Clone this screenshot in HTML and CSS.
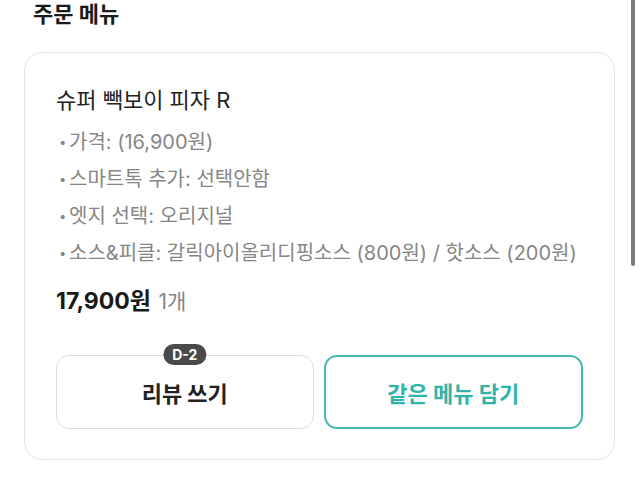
FILE: index.html
```html
<!DOCTYPE html>
<html lang="ko">
<head>
    <meta charset="UTF-8">
    <meta name="viewport" content="width=device-width, initial-scale=1.0">
    <title>주문 메뉴</title>
    <link rel="stylesheet" href="styles.css">
</head>
<body>
    <div class="page">
        <h2 class="section-title">주문 메뉴</h2>
        <div class="menu-card">
            <div class="menu-name">슈퍼 빽보이 피자 R</div>
            <ul class="option-list">
                <li>가격: (16,900원)</li>
                <li>스마트톡 추가: 선택안함</li>
                <li>엣지 선택: 오리지널</li>
                <li>소스&amp;피클: 갈릭아이올리디핑소스 (800원) / 핫소스 (200원)</li>
            </ul>
            <div class="price-row">
                <span class="price">17,900원</span>
                <span class="qty">1개</span>
            </div>
            <div class="btn-row">
                <button class="btn btn-review">
                    <span class="d-badge">D-2</span>
                    리뷰 쓰기
                </button>
                <button class="btn btn-again">같은 메뉴 담기</button>
            </div>
        </div>
    </div>
    <div class="scroll-thumb"></div>
</body>
</html>
```

FILE: styles.css
```css
* { margin: 0; padding: 0; box-sizing: border-box; }
body {
    font-family: Inter, "Noto Sans CJK KR", sans-serif;
    background: #fff;
    color: #222;
    width: 640px;
    height: 496px;
    overflow: hidden;
    position: relative;
}
.page {
    padding: 0 25px 0 24px;
    width: 640px;
}
.section-title {
    font-size: 22px;
    font-weight: 700;
    color: #1a1a1a;
    line-height: 28px;
    padding-left: 9px;
    margin-bottom: 24px;
}
.menu-card {
    border: 1px solid #e6e6e6;
    border-radius: 18px;
    padding: 32px 31px 30px 31px;
}
.menu-name {
    font-size: 22px;
    line-height: 30px;
    color: #222;
    margin-bottom: 9px;
}
.option-list {
    list-style: none;
    font-size: 20px;
    line-height: 37px;
    color: #868686;
}
.option-list li {
    height: 37px;
    white-space: nowrap;
}
.option-list li::before {
    content: '•';
    display: inline-block;
    width: 10px;
    margin-left: 3px;
    font-size: 13px;
    line-height: 37px;
    vertical-align: top;
}
.price-row {
    margin-top: 14px;
    line-height: 30px;
}
.price {
    font-size: 23px;
    font-weight: 700;
    color: #1a1a1a;
}
.qty {
    font-size: 21px;
    color: #868686;
    margin-left: 3px;
}
.btn-row {
    display: flex;
    gap: 10px;
    margin-top: 37px;
}
.btn {
    flex: 1;
    height: 74px;
    background: #fff;
    border-radius: 13px;
    font-family: inherit;
    font-size: 22px;
    font-weight: 700;
    position: relative;
}
.btn-review {
    border: 1px solid #dcdcdc;
    color: #222;
}
.btn-again {
    border: 2px solid #45b9b1;
    color: #2fb3aa;
}
.d-badge {
    position: absolute;
    top: -12px;
    left: 50%;
    transform: translateX(-50%);
    background: #4a4a4a;
    color: #fff;
    font-size: 14px;
    font-weight: 700;
    line-height: 21px;
    padding: 0 9px;
    border-radius: 11px;
}
.scroll-thumb {
    position: absolute;
    top: 0;
    right: 5px;
    width: 4px;
    height: 266px;
    background: #7a7a7a;
    border-radius: 0 0 2px 2px;
}
```
